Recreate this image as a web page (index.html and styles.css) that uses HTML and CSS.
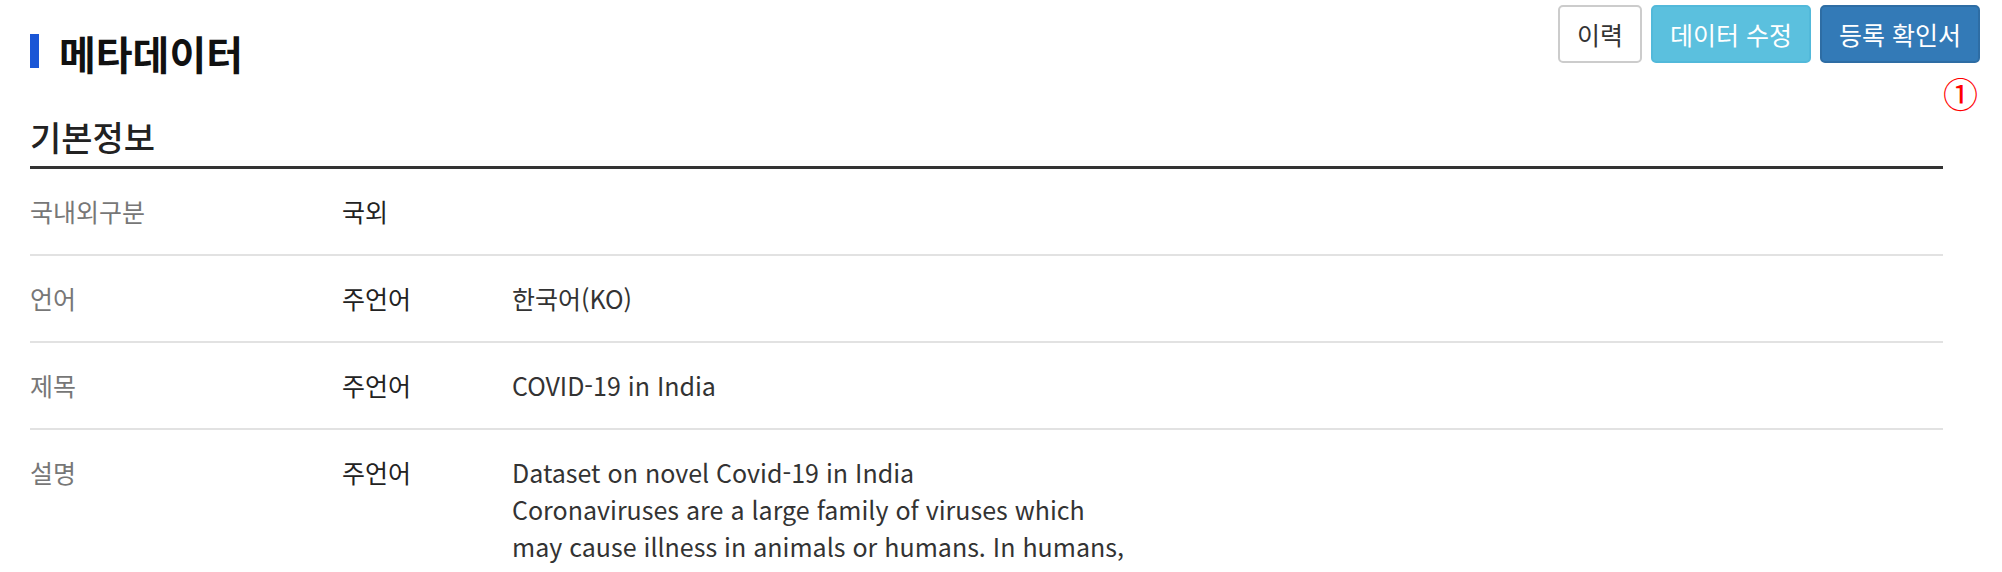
FILE: index.html
```html
<!DOCTYPE html>
<html lang="ko">
<head>
<meta charset="utf-8">
<title>메타데이터</title>
<link rel="stylesheet" href="styles.css">
</head>
<body>
<div class="page">
  <div class="top">
    <h1 class="title"><span class="bar"></span>메타데이터</h1>
    <div class="actions">
      <div class="buttons">
        <button class="btn btn-default">이력</button>
        <button class="btn btn-info">데이터 수정</button>
        <button class="btn btn-primary">등록 확인서</button>
      </div>
      <div class="mark">①</div>
    </div>
  </div>
  <section class="section">
    <h2 class="section-title">기본정보</h2>
    <div class="rows">
      <div class="row">
        <div class="label">국내외구분</div>
        <div class="sub">국외</div>
        <div class="value"></div>
      </div>
      <div class="row">
        <div class="label">언어</div>
        <div class="sub">주언어</div>
        <div class="value">한국어(KO)</div>
      </div>
      <div class="row">
        <div class="label">제목</div>
        <div class="sub">주언어</div>
        <div class="value">COVID-19 in India</div>
      </div>
      <div class="row">
        <div class="label">설명</div>
        <div class="sub">주언어</div>
        <div class="value desc">Dataset on novel Covid-19 in India<br>Coronaviruses are a large family of viruses which<br>may cause illness in animals or humans. In humans,</div>
      </div>
    </div>
  </section>
</div>
</body>
</html>
```
FILE: styles.css
```css
html, body {
  margin: 0;
  padding: 0;
  background: #fff;
}
body {
  font-family: "Noto Sans CJK KR", "Noto Sans", sans-serif;
  color: #333;
}
.page {
  padding: 5px 22px 0 30px;
}
.top {
  display: flex;
  justify-content: space-between;
  align-items: flex-start;
}
.title {
  margin: 26px 0 0 0;
  display: flex;
  align-items: center;
  gap: 20px;
  font-size: 40px;
  font-weight: 700;
  color: #111;
  line-height: 44px;
}
.bar {
  display: block;
  width: 9px;
  height: 34px;
  margin-bottom: 4px;
  background: #1a56d6;
}
.actions {
  display: flex;
  flex-direction: column;
  align-items: flex-end;
}
.buttons {
  display: flex;
  gap: 9px;
}
.btn {
  height: 58px;
  padding: 0 17px;
  font-family: inherit;
  font-size: 25px;
  border-radius: 5px;
  border: 2px solid #ccc;
  background: #fff;
  color: #333;
}
.btn-info {
  background: #5bc0de;
  border-color: #52b9da;
  color: #fff;
}
.btn-primary {
  background: #337ab7;
  border-color: #2e6da4;
  color: #fff;
}
.mark {
  color: #f00;
  font-size: 35px;
  line-height: 36px;
  margin-top: 12px;
  margin-right: 2px;
}
.section {
  margin-right: 37px;
}
.section-title {
  margin: 6px 0 0 0;
  font-size: 34px;
  font-weight: 500;
  color: #222;
  line-height: 40px;
  padding-bottom: 9px;
  border-bottom: 3px solid #333;
}
.row {
  display: grid;
  grid-template-columns: 312px 170px 1fr;
  padding: 24px 0;
  border-bottom: 2px solid #e2e2e2;
  font-size: 25px;
  line-height: 37px;
}
.label {
  color: #777;
}
.sub {
  color: #222;
}
.value {
  color: #333;
}
```
